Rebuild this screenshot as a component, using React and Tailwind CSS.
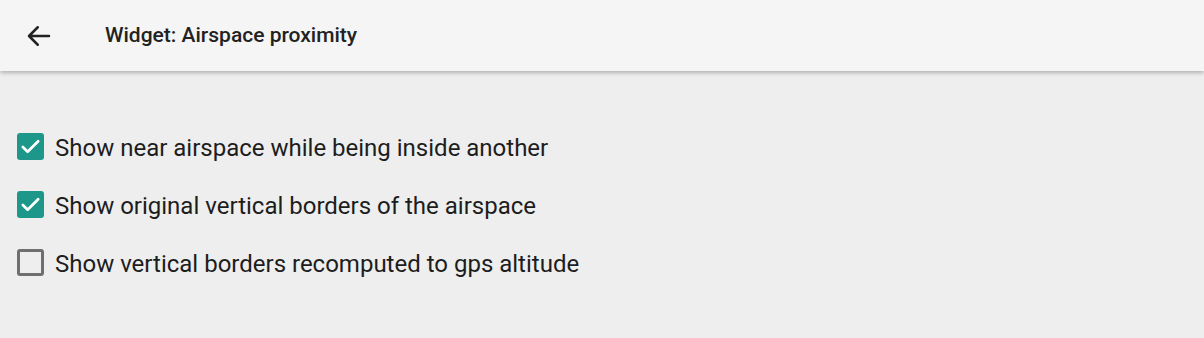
import React from 'react';

const items = [
  { label: 'Show near airspace while being inside another', checked: true },
  { label: 'Show original vertical borders of the airspace', checked: true },
  { label: 'Show vertical borders recomputed to gps altitude', checked: false },
];

const Check = ({ checked }) =>
  checked ? (
    <div className="w-[27px] h-[27px] rounded-[3px] bg-[#1c978a] flex items-center justify-center shrink-0">
      <svg width="23" height="23" viewBox="0 0 24 24" fill="none" stroke="#fff" strokeWidth="2.8" strokeLinecap="round" strokeLinejoin="round">
        <path d="M4 12.5l5 5L20 6.5" />
      </svg>
    </div>
  ) : (
    <div className="w-[27px] h-[27px] rounded-[3px] border-[3px] border-[#6f6f6f] shrink-0" />
  );

const App = () => {
  return (
    <div className="w-[1204px] h-[338px] bg-[#eeeeee] font-['Roboto',sans-serif] overflow-hidden">
      <div className="h-[71px] bg-[#f5f5f5] flex items-center shadow-[0_2px_4px_rgba(0,0,0,0.25)] relative">
        <div className="w-[78px] flex items-center justify-center">
          <svg width="30" height="30" viewBox="0 0 24 24" fill="none" stroke="#222" strokeWidth="2" strokeLinecap="round" strokeLinejoin="round">
            <path d="M20 12H4M11 5l-7 7 7 7" />
          </svg>
        </div>
        <div className="ml-[27px] text-[21px] font-medium text-[#222]">Widget: Airspace proximity</div>
      </div>
      <div className="pt-[62px] pl-[17px] flex flex-col gap-[31px]">
        {items.map((it) => (
          <div key={it.label} className="flex items-center h-[27px]">
            <Check checked={it.checked} />
            <span className="ml-[11px] text-[24px] leading-none pt-[2px] text-[#1d1d1d]">{it.label}</span>
          </div>
        ))}
      </div>
    </div>
  );
};

export default App;
